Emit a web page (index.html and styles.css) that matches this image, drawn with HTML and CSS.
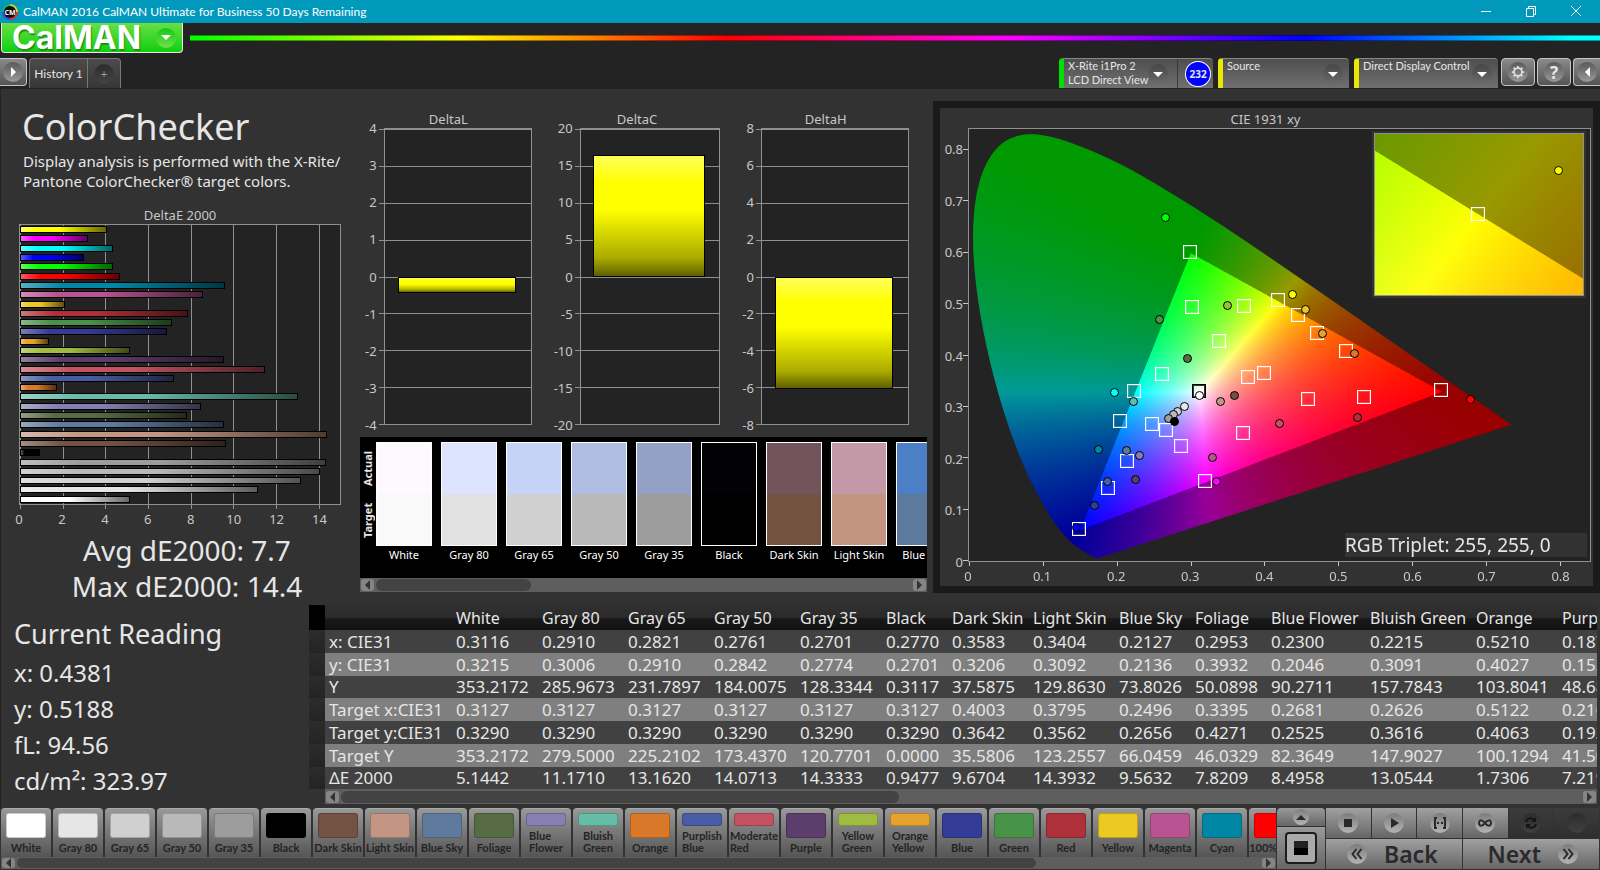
FILE: index.html
```
<!DOCTYPE html>
<html lang="en">
<head>
    <meta charset="UTF-8">
    <meta name="viewport" content="width=device-width, initial-scale=1.0">
    <title>CalMAN 2016 CalMAN Ultimate for Business 50 Days Remaining</title>
    <link rel="stylesheet" href="styles.css">
</head>
<body>

    <header class="titlebar">
        <svg class="app-icon" viewBox="0 0 16 16">
            <circle cx="8" cy="8" r="7" fill="none" stroke="#e0303a" stroke-width="2" stroke-dasharray="11 33"/>
            <circle cx="8" cy="8" r="7" fill="none" stroke="#5a3ad8" stroke-width="2" stroke-dasharray="11 33" stroke-dashoffset="-11"/>
            <circle cx="8" cy="8" r="7" fill="none" stroke="#20b060" stroke-width="2" stroke-dasharray="11 33" stroke-dashoffset="-22"/>
            <circle cx="8" cy="8" r="7" fill="none" stroke="#e8d020" stroke-width="2" stroke-dasharray="11 33" stroke-dashoffset="-33"/>
            <circle cx="8" cy="8" r="6" fill="#0a0a0a"/>
            <text x="8" y="11" class="app-icon-text">CM</text>
        </svg>
        <span class="titlebar-text">CalMAN 2016 CalMAN Ultimate for Business 50 Days Remaining</span>
        <div class="window-buttons">
            <button aria-label="Minimize"><svg viewBox="0 0 12 12"><path d="M1 6.5h10"/></svg></button>
            <button aria-label="Restore"><svg viewBox="0 0 12 12"><path d="M1.5 3.5h7v8h-7zM3.5 3.500v-2h7v8h-2"/></svg></button>
            <button aria-label="Close"><svg viewBox="0 0 12 12"><path d="M1 1l10 10M11 1L1 11"/></svg></button>
        </div>
    </header>

    <div class="brand-row">
        <button class="brand">CalMAN <span class="round green"><i class="tri down"></i></span></button>
        <div class="rainbow"></div>
    </div>

    <nav class="tab-row">
        <button class="square-btn first" aria-label="Show panel"><span class="round"><i class="tri right"></i></span></button>
        <div class="tabs">
            <button class="tab">History 1</button>
            <button class="tab add" aria-label="Add tab"><span class="round dark">+</span></button>
        </div>
        <div class="devices">
            <div class="device meter">
                <button class="device-btn"><span>X-Rite i1Pro 2<br>LCD Direct View</span><span class="round dark"><i class="tri down"></i></span></button>
                <span class="badge">232</span>
            </div>
            <div class="device source">
                <button class="device-btn"><span>Source</span><span class="round dark"><i class="tri down"></i></span></button>
            </div>
            <div class="device display">
                <button class="device-btn"><span>Direct Display Control</span><span class="round dark"><i class="tri down"></i></span></button>
            </div>
            <button class="square-btn" aria-label="Settings">
                <span class="round"><svg viewBox="0 0 16 16" class="gear"><circle cx="8" cy="8" r="4.500"/><path d="M8 1v2.500M8 12.500V15M1 8h2.500M12.500 8H15M3 3l2 2M11 11l2 2M13 3l-2 2M5 11l-2 2"/></svg></span>
            </button>
            <button class="square-btn help" aria-label="Help"><span class="round">?</span></button>
            <button class="square-btn last" aria-label="Hide panel"><span class="round"><i class="tri left"></i></span></button>
        </div>
    </nav>

    <main>
        <div class="top">
            <section class="summary">
                <h1>ColorChecker</h1>
                <p class="intro">Display analysis is performed with the X-Rite/<br>Pantone ColorChecker® target colors.</p>
                <div class="chart-title de-title">DeltaE 2000</div>
                <div class="de-plot" id="dePlot"></div>
                <div class="de-axis" id="deAxis"></div>
                <p class="stats">Avg dE2000: 7.7<br>Max dE2000: 14.4</p>
            </section>

            <section class="middle">
                <div class="deltas" id="deltas"></div>
                <div class="compare">
                    <div class="compare-body">
                        <div class="compare-side"><span>Actual</span><span>Target</span></div>
                        <div class="compare-list" id="compareList"></div>
                    </div>
                    <div class="scroll">
                        <button aria-label="Scroll left"><i class="tri left"></i></button>
                        <div class="track"><div class="thumb compare-thumb"></div></div>
                        <button aria-label="Scroll right"><i class="tri right"></i></button>
                    </div>
                </div>
            </section>

            <section class="cie">
                <div class="chart-title">CIE 1931 xy</div>
                <div class="cie-grid">
                    <div class="cie-y" id="cieY"></div>
                    <div class="cie-plot" id="ciePlot">
                        <canvas id="cieCanvas"></canvas>
                        <div class="inset" id="inset"><canvas id="insetCanvas"></canvas></div>
                        <div class="triplet">RGB Triplet: 255, 255, 0</div>
                    </div>
                    <div class="cie-x" id="cieX"></div>
                </div>
            </section>
        </div>

        <div class="bottom">
            <section class="reading">
                <h2>Current Reading</h2>
                <p>x: 0.4381</p>
                <p>y: 0.5188</p>
                <p>fL: 94.56</p>
                <p>cd/m²: 323.97</p>
            </section>
            <section class="data">
                <table id="dataTable"></table>
                <div class="scroll data-scroll">
                    <button aria-label="Scroll left"><i class="tri left"></i></button>
                    <div class="track"><div class="thumb data-thumb"></div></div>
                    <button aria-label="Scroll right"><i class="tri right"></i></button>
                </div>
            </section>
        </div>
    </main>

    <footer>
        <div class="patches">
            <div class="patch-list" id="patchList"></div>
            <div class="scroll">
                <button aria-label="Scroll left"><i class="tri left"></i></button>
                <div class="track"><div class="thumb patch-thumb"></div></div>
                <button aria-label="Scroll right"><i class="tri right"></i></button>
            </div>
        </div>
        <div class="pattern">
            <button class="pattern-up" aria-label="Expand"><span class="round light"><i class="tri up"></i></span></button>
            <button class="pattern-window" aria-label="Pattern window"><span class="window-icon"><i></i></span></button>
        </div>
        <div class="controls">
            <button aria-label="Stop"><span class="round light"><svg viewBox="0 0 20 20"><path d="M6 6h8v8H6z"/></svg></span></button>
            <button aria-label="Play"><span class="round light"><svg viewBox="0 0 20 20"><path d="M7 5l8 5-8 5z"/></svg></span></button>
            <button aria-label="Read series"><span class="round light"><svg viewBox="0 0 20 20"><path class="line" d="M7 5H5v10h2M13 5h2v10h-2"/><path d="M7 9h2v2H7zM11 9h2v2h-2z"/></svg></span></button>
            <button aria-label="Continuous"><span class="round light"><svg viewBox="0 0 20 20"><path class="line" d="M10 10c-2-3-6-4-6 0s4 3 6 0 6-4 6 0-4 3-6 0z"/></svg></span></button>
            <button class="off" aria-label="Refresh"><span class="round dark"><svg viewBox="0 0 20 20"><path class="line thick" d="M5 9c1-4 6-5 8-2M15 11c-1 4-6 5-8 2"/><path d="M15 4v5h-5zM5 16v-5h5z"/></svg></span></button>
            <button class="off" aria-label="Unused"><span class="round dark"></span></button>
            <button class="wide"><span class="round light"><svg viewBox="0 0 20 20"><path class="line" d="M9.500 5l-4 5 4 5M14.500 5l-4 5 4 5"/></svg></span><b>Back</b></button>
            <button class="wide next"><b>Next</b><span class="round light"><svg viewBox="0 0 20 20"><path class="line" d="M5.500 5l4 5-4 5M10.500 5l4 5-4 5"/></svg></span></button>
        </div>
    </footer>

    <script src="script.js"></script>
</body>
</html>
```
FILE: styles.css
```
* {
    box-sizing: border-box;
}

body {
    margin: 0;
    height: 100vh;
    overflow: hidden;
    display: flex;
    flex-direction: column;
    background-color: #232323;
    color: #e6e6e6;
    font-family: "Noto Sans", "Open Sans", sans-serif;
    font-size: 13px;
}

button {
    font-family: inherit;
    font-size: inherit;
    color: inherit;
    border: none;
    padding: 0;
    margin: 0;
    background: none;
    cursor: pointer;
}

h1, h2, p {
    margin: 0;
    font-weight: normal;
}

canvas {
    display: block;
    width: 100%;
    height: 100%;
}

/* small shared shapes */
.tri {
    display: block;
    border: 5px solid transparent;
}

.tri.down {
    border-top-color: #fff;
    border-bottom: none;
}

.tri.up {
    border-bottom-color: #2a2a2a;
    border-top: none;
}

.tri.right {
    border-left-color: #fff;
    border-right: none;
}

.tri.left {
    border-right-color: #fff;
    border-left: none;
}

.round {
    display: flex;
    align-items: center;
    justify-content: center;
    flex: none;
    width: 20px;
    height: 20px;
    border-radius: 50%;
    background: linear-gradient(#5a5a5a, #999);
}

.round.dark {
    background: linear-gradient(#474747, #6a6a6a);
}

.round.green {
    background: linear-gradient(#14c814, #6fe24c);
}

.round.light {
    background: linear-gradient(#7c7c7c, #b4b4b4);
}

/* title bar */
.titlebar {
    display: flex;
    align-items: center;
    height: 23px;
    flex: none;
    padding-left: 2px;
    background-color: #0099bc;
    color: #fff;
}

.app-icon {
    width: 16px;
    height: 16px;
    margin-right: 5px;
}

.app-icon-text {
    font-size: 7px;
    font-weight: bold;
    fill: #fff;
    text-anchor: middle;
}

.titlebar-text {
    font-family: Lato, sans-serif;
    font-size: 12px;
}

.window-buttons {
    display: flex;
    margin-left: auto;
    margin-right: 2px;
}

.window-buttons button {
    width: 45px;
    height: 23px;
}

.window-buttons svg {
    width: 12px;
    height: 12px;
    fill: none;
    stroke: #fff;
}

.window-buttons button:hover {
    background-color: #33adc9;
}

/* brand and rainbow line */
.brand-row {
    display: flex;
    height: 35px;
    flex: none;
}

.brand {
    display: flex;
    align-items: center;
    justify-content: space-between;
    width: 182px;
    height: 30px;
    margin-left: 1px;
    padding: 0 6px 0 10px;
    border: 1px solid #e8e8e8;
    border-top: none;
    border-radius: 0 0 4px 4px;
    background: linear-gradient(#68e044, #10cf10);
    color: #fff;
    font-family: Inter, sans-serif;
    font-size: 32px;
    font-weight: 700;
    line-height: 28px;
    text-shadow: 1px 2px 1px #2a8a1a;
}

.rainbow {
    flex: 1;
    height: 6px;
    margin: 12px 0 0 7px;
    border: 1px solid rgba(0, 0, 0, 0.4);
    border-width: 1px 0;
    background: linear-gradient(to right, #0f0, #ff0 19%, #f00 38%, #f0f 58%, #00f 79%, #0ff 98%);
}

/* tabs and devices */
.tab-row {
    display: flex;
    height: 31px;
    flex: none;
}

.square-btn {
    display: flex;
    align-items: center;
    justify-content: center;
    width: 34px;
    height: 28px;
    border: 1px solid #c4c4c4;
    border-radius: 4px;
    background: linear-gradient(#8a8a8a, #555);
}

.square-btn.first {
    width: 27px;
    border-left: none;
    border-radius: 0 4px 4px 0;
}

.square-btn.last {
    width: 27px;
    border-right: none;
    border-radius: 4px 0 0 4px;
}

.square-btn.help {
    font-size: 17px;
    font-weight: bold;
}

.gear {
    width: 14px;
    height: 14px;
    fill: none;
    stroke: #ddd;
    stroke-width: 2;
}

.tabs {
    display: flex;
    height: 30px;
    margin-left: 2px;
    border: 1px solid #777;
    border-bottom: none;
    border-radius: 4px 4px 0 0;
    background: linear-gradient(#4c4c4c, #363636);
}

.tab {
    width: 57px;
    font-size: 12px;
    font-family: Lato, sans-serif;
}

.tab.add {
    display: flex;
    align-items: center;
    justify-content: center;
    width: 33px;
    border-left: 1px solid #777;
    color: #999;
}

.tab .round {
    background: linear-gradient(#2c2c2c, #444);
}

.devices {
    display: flex;
    gap: 2px;
    margin-left: auto;
}

.device {
    display: flex;
    align-items: center;
    height: 30px;
    margin-right: 3px;
    border-top: 1px solid #888;
    border-left: 5px solid #e8e800;
    border-radius: 4px 4px 0 0;
    background: linear-gradient(#4e4e4e, #707070);
}

.device-btn {
    display: flex;
    flex: 1;
    align-items: flex-start;
    justify-content: space-between;
    height: 29px;
    padding: 0 6px 0 4px;
    font-family: Lato, sans-serif;
    font-size: 11px;
    line-height: 14px;
    text-align: left;
    white-space: nowrap;
}

.device-btn .round {
    margin-top: 5px;
}

.meter {
    width: 154px;
    border-left-color: #00e000;
}

.meter .device-btn {
    padding-right: 9px;
    border-right: 1px solid #3a3a3a;
}

.source {
    width: 131px;
}

.display {
    width: 144px;
    margin-right: 1px;
}

.badge {
    width: 26px;
    height: 26px;
    margin: 0 2px 0 7px;
    border: 1px solid #fff;
    border-radius: 50%;
    background-color: #00f;
    font-size: 10px;
    font-weight: bold;
    line-height: 24px;
    text-align: center;
}

/* main area */
main {
    flex: 1;
    min-height: 0;
    border-left: 1px solid #222;
    background-color: #323232;
}

.top {
    display: flex;
    height: 511px;
}

.summary {
    width: 349px;
    flex: none;
    padding: 14px 9px 0 18px;
}

h1 {
    padding-left: 3px;
    font-size: 36px;
    line-height: 48px;
}

.intro {
    padding-left: 4px;
    font-size: 15px;
    line-height: 20px;
    white-space: nowrap;
}

.chart-title {
    color: #c8c8c8;
    font-size: 13px;
    line-height: 18px;
    text-align: center;
}

.de-title {
    margin-top: 15px;
}

.de-plot {
    position: relative;
    display: flex;
    flex-direction: column;
    justify-content: space-around;
    height: 281px;
    border: 1px solid #909090;
    background-color: #232323;
}

.grid-v {
    position: absolute;
    top: 0;
    bottom: -5px;
    width: 1px;
    background-color: #909090;
}

.de-bar {
    position: relative;
    height: 7px;
    border: 1px solid #000;
}

.de-axis {
    position: relative;
    height: 27px;
}

.de-axis span,
.cie-x span {
    position: absolute;
    top: 3px;
    width: 40px;
    margin-left: -20px;
    color: #c8c8c8;
    font-size: 13px;
    line-height: 22px;
    text-align: center;
}

.stats {
    padding-left: 14px;
    font-size: 28px;
    line-height: 36px;
    text-align: center;
}

/* delta charts */
.middle {
    width: 583px;
    flex: none;
    padding-left: 10px;
}

.deltas {
    display: flex;
    gap: 22px;
    height: 348px;
    padding: 21px 24px 0 5px;
}

.delta {
    flex: 1;
}

.delta-body {
    display: flex;
    height: 297px;
}

.delta-labels {
    display: flex;
    flex-direction: column;
    justify-content: space-between;
    margin: -9px 7px -9px 0;
    color: #c8c8c8;
    font-size: 13px;
    line-height: 18px;
    text-align: right;
}

.delta-plot {
    position: relative;
    flex: 1;
    border: 1px solid #909090;
    background-color: #232323;
}

.grid-h {
    position: absolute;
    left: -6px;
    right: 0;
    height: 1px;
    background-color: #909090;
}

.delta-bar {
    position: absolute;
    left: 9%;
    right: 10%;
    border: 1px solid #000;
    background: linear-gradient(#ffff5a, #ff0 22%, #ff0 45%, #aaaa00 85%, #606000);
}

/* actual / target swatches */
.compare {
    width: 567px;
    background-color: #000;
}

.compare-body {
    display: flex;
    height: 141px;
    padding-top: 5px;
}

.compare-side {
    display: flex;
    flex-direction: column;
    width: 16px;
    height: 104px;
    flex: none;
}

.compare-side span {
    flex: 1;
    font-size: 11px;
    font-weight: bold;
    line-height: 15px;
    text-align: center;
    writing-mode: vertical-rl;
    transform: rotate(180deg);
}

.compare-list {
    display: flex;
    gap: 9px;
    overflow: hidden;
}

.compare-item {
    width: 56px;
    flex: none;
    color: #fff;
    font-size: 11px;
    line-height: 18px;
    text-align: center;
    white-space: nowrap;
}

.compare-swatch {
    height: 104px;
    border: 1px solid #fff;
}

/* drawn scroll bars */
.scroll {
    display: flex;
    align-items: center;
    height: 14px;
    padding: 0 1px;
    background-color: #5e5e5e;
}

.scroll button {
    display: flex;
    align-items: center;
    justify-content: center;
    width: 13px;
    height: 12px;
    border-radius: 3px;
    background-color: #858585;
}

.scroll .tri.left {
    border-right-color: #333;
}

.scroll .tri.right {
    border-left-color: #333;
}

.track {
    flex: 1;
    padding: 0 2px;
}

.thumb {
    height: 12px;
    border-radius: 6px;
    background-color: #434343;
}

.compare-thumb {
    width: 29%;
}

.data-thumb {
    width: 45%;
}

.patch-thumb {
    width: 82%;
}

/* CIE chart */
.cie {
    flex: 1;
    height: 492px;
    margin-top: 12px;
    padding: 2px 2px 0 0;
    border: 7px solid #1a1a1a;
}

.cie-grid {
    display: grid;
    grid-template-columns: 28px 1fr;
    grid-template-rows: 434px 24px;
}

.cie-y {
    position: relative;
}

.cie-y span {
    position: absolute;
    right: 5px;
    margin-bottom: -9px;
    color: #c8c8c8;
    font-size: 13px;
    line-height: 18px;
}

.cie-x {
    position: relative;
    grid-column: 2;
}

.cie-plot {
    position: relative;
    border: 1px solid #909090;
    background-color: #232323;
}

.tick-x {
    position: absolute;
    bottom: -5px;
    width: 1px;
    height: 4px;
    background-color: #c8c8c8;
}

.tick-y {
    position: absolute;
    left: -6px;
    width: 5px;
    height: 1px;
    background-color: #c8c8c8;
}

.inset {
    position: absolute;
    top: 4px;
    right: 6px;
    width: 210px;
    height: 163px;
    border: 1px solid #909090;
    box-shadow: 0 0 0 2px #323232;
}

.triplet {
    position: absolute;
    right: 3px;
    bottom: 4px;
    width: 242px;
    height: 24px;
    background-color: #323232;
    font-size: 19px;
    line-height: 24px;
}

.target {
    position: absolute;
    width: 14px;
    height: 14px;
    margin: -8px 0 0 -8px;
    border: 1px solid #fff;
    outline: 1px solid rgba(255, 255, 255, 0.2);
    outline-offset: -2px;
}

.target.current {
    border: 2px solid #000;
}

.measured {
    position: absolute;
    width: 9px;
    height: 9px;
    margin: -5px 0 0 -4px;
    border: 1px solid #000;
    border-radius: 50%;
}

/* reading and data table */
.bottom {
    display: flex;
}

.reading {
    width: 308px;
    flex: none;
    padding: 13px 0 0 13px;
}

h2 {
    font-size: 27px;
    line-height: 42px;
}

.reading p {
    font-size: 24px;
    line-height: 36px;
}

.data {
    flex: 1;
    min-width: 0;
    margin: 5px 3px 0 0;
    overflow: hidden;
}

table {
    width: 1365px;
    table-layout: fixed;
    border-collapse: collapse;
    font-size: 17px;
}

th, td {
    height: 23px;
    padding: 0 0 0 5px;
    font-weight: normal;
    line-height: 22px;
    text-align: left;
    white-space: nowrap;
}

tbody tr:nth-child(4n+3) > * {
    height: 22px;
}

thead tr {
    background: linear-gradient(#303030, #2a2a2a 50%, #1a1a1a 51%, #111);
}

thead th {
    height: 25px;
    font-size: 16px;
}

thead .handle {
    background-color: #000;
}

tbody tr {
    background-color: #414141;
}

tbody tr:nth-child(even) {
    background-color: #7f7f7f;
}

tbody th {
    padding-left: 4px;
}

tbody .handle {
    background: linear-gradient(#2c2c2c, #242424);
}

.data-scroll {
    height: 15px;
    margin-left: 16px;
}

/* patch buttons */
footer {
    display: flex;
    height: 62px;
    flex: none;
    background-color: #323232;
}

.patches {
    flex: 1;
    min-width: 0;
    padding-left: 1px;
}

.patch-list {
    display: flex;
    gap: 2px;
    height: 49px;
    overflow: hidden;
}

.patch {
    display: flex;
    flex-direction: column;
    align-items: center;
    width: 50px;
    height: 49px;
    flex: none;
    padding: 4px 0 3px;
    border-top: 1px solid #aaa;
    border-radius: 4px 4px 0 0;
    background: linear-gradient(#989898, #555);
    color: #242424;
    font-family: Lato, sans-serif;
    font-size: 11px;
    font-weight: bold;
    line-height: 12px;
    text-align: left;
    white-space: nowrap;
}

.patch-color {
    width: 40px;
    flex: 1;
    margin-bottom: 4px;
    border: 1px solid rgba(0, 0, 0, 0.2);
    border-radius: 3px;
}

.patches .scroll {
    height: 12px;
}

.patches .scroll button,
.patches .thumb {
    height: 10px;
}

.pattern {
    width: 48px;
    margin: 0 1px;
}

.pattern button {
    display: flex;
    align-items: center;
    justify-content: center;
    width: 48px;
    background: linear-gradient(#999, #666);
}

.pattern .pattern-up {
    height: 18px;
    margin-bottom: 1px;
    border-radius: 4px 4px 0 0;
}

.pattern .round {
    width: 16px;
    height: 16px;
}

.pattern .pattern-window {
    height: 42px;
}

.window-icon {
    padding: 7px;
    border: 2px solid #1c1c1c;
    border-radius: 4px;
    background-color: #aaa;
}

.window-icon i {
    display: block;
    width: 14px;
    height: 14px;
    background: linear-gradient(#222 50%, #000 50%);
}

.controls {
    display: grid;
    grid-template-columns: repeat(6, 1fr);
    grid-template-rows: 30px 30px;
    gap: 1px;
    width: 273px;
    margin-right: 1px;
}

.controls button {
    display: flex;
    align-items: center;
    justify-content: center;
    background: linear-gradient(#a0a0a0, #666);
}

.controls .off {
    background: linear-gradient(#3c3c3c, #2e2e2e);
}

.controls .off .round {
    background: linear-gradient(#2c2c2c, #404040);
}

.controls svg {
    width: 20px;
    height: 20px;
    fill: #2a2a2a;
}

.controls .line {
    fill: none;
    stroke: #2a2a2a;
    stroke-width: 2;
}

.controls .off svg {
    fill: #151515;
}

.controls .off .line {
    stroke: #151515;
}

.controls .wide {
    grid-column: span 3;
    justify-content: flex-start;
    gap: 17px;
    padding: 0 21px;
    color: #2a2a2a;
    font-size: 23px;
}

.controls .next {
    justify-content: flex-end;
}

.controls b {
    font-weight: 600;
    line-height: 28px;
}
```
FILE: script.js
```
// name, color, deltaE, target xy, measured xy
const patches = [
    ["White", "#ffffff", 5.1442, 0.3127, 0.3290, 0.3116, 0.3215],
    ["Gray 80", "#e6e6e6", 11.171, 0.3127, 0.3290, 0.2910, 0.3006],
    ["Gray 65", "#d0d0d0", 13.162, 0.3127, 0.3290, 0.2821, 0.2910],
    ["Gray 50", "#b9b9b9", 14.0713, 0.3127, 0.3290, 0.2761, 0.2842],
    ["Gray 35", "#9d9d9d", 14.3333, 0.3127, 0.3290, 0.2701, 0.2774],
    ["Black", "#000000", 0.9477, 0.3127, 0.3290, 0.2770, 0.2701],
    ["Dark Skin", "#735244", 9.6704, 0.4003, 0.3642, 0.3583, 0.3206],
    ["Light Skin", "#c29682", 14.3932, 0.3795, 0.3562, 0.3404, 0.3092],
    ["Blue Sky", "#5e7a9d", 9.5632, 0.2496, 0.2656, 0.2127, 0.2136],
    ["Foliage", "#576c42", 7.8209, 0.3395, 0.4271, 0.2953, 0.3932],
    ["Blue Flower", "#8580b1", 8.4958, 0.2681, 0.2525, 0.2300, 0.2046],
    ["Bluish Green", "#65bda8", 13.0544, 0.2626, 0.3616, 0.2215, 0.3091],
    ["Orange", "#d97828", 1.7306, 0.5122, 0.4063, 0.5210, 0.4027],
    ["Purplish Blue", "#4a5ca6", 7.219, 0.2160, 0.1920, 0.1870, 0.1530],
    ["Moderate Red", "#c35362", 11.47, 0.4600, 0.3130, 0.4195, 0.2675],
    ["Purple", "#5c3d6b", 9.55, 0.2890, 0.2220, 0.2245, 0.1570],
    ["Yellow Green", "#9fbb40", 5.15, 0.3740, 0.4950, 0.3490, 0.4970],
    ["Orange Yellow", "#e6a22e", 1.35, 0.4730, 0.4420, 0.4780, 0.4415],
    ["Blue", "#333c96", 6.88, 0.1900, 0.1410, 0.1687, 0.1070],
    ["Green", "#479347", 7.13, 0.3035, 0.4925, 0.2575, 0.4700],
    ["Red", "#ae3038", 7.87, 0.5365, 0.3170, 0.5260, 0.2790],
    ["Yellow", "#ebc822", 2.1, 0.4465, 0.4765, 0.4555, 0.4880],
    ["Magenta", "#b95391", 8.56, 0.3720, 0.2470, 0.3286, 0.2000],
    ["Cyan", "#0087a6", 9.6, 0.2060, 0.2705, 0.1745, 0.2155],
    ["100% Red", "#ff0000", 4.7, 0.6400, 0.3300, 0.6790, 0.3135],
    ["100% Green", "#00ff00", 4.35, 0.3000, 0.6000, 0.2650, 0.6670],
    ["100% Blue", "#0000ff", 3.0, 0.1500, 0.0600, 0.1448, 0.0640],
    ["100% Cyan", "#00ffff", 4.35, 0.2246, 0.3287, 0.1970, 0.3270],
    ["100% Magenta", "#ff00ff", 3.2, 0.3209, 0.1542, 0.3340, 0.1535],
    ["100% Yellow", "#ffff00", 4.06, 0.4193, 0.5053, 0.4381, 0.5188]
];

function add(parent, className, style, text) {
    const el = document.createElement(parent.tagName === "DIV" && text !== undefined ? "span" : "div");
    el.className = className;
    Object.assign(el.style, style || {});
    if (text !== undefined) el.textContent = text;
    parent.appendChild(el);
    return el;
}

// DeltaE bars, last patch on top
const dePlot = document.getElementById("dePlot");
const deAxis = document.getElementById("deAxis");
for (let v = 0; v < 15; v += 2) {
    add(dePlot, "grid-v", { left: v / 15 * 100 + "%" });
    add(deAxis, "", { left: v / 15 * 100 + "%" }, v);
}
[...patches].reverse().forEach(([, color, dE]) => {
    add(dePlot, "de-bar", {
        width: dE / 15 * 100 + "%",
        background: `linear-gradient(to right, rgba(255,255,255,.35), transparent 20%, transparent 45%, rgba(0,0,0,.6)), ${color}`
    });
});

// DeltaL, DeltaC, DeltaH
[["DeltaL", 4, -0.46], ["DeltaC", 20, 16.5], ["DeltaH", 8, -6.1]].forEach(([name, max, value]) => {
    const chart = add(document.getElementById("deltas"), "delta");
    add(chart, "chart-title").textContent = name;
    const body = add(chart, "delta-body");
    const labels = add(body, "delta-labels");
    const plot = add(body, "delta-plot");
    for (let i = 0; i <= 8; i++) {
        add(labels, "", {}, max - i * max / 4);
        add(plot, "grid-h", { top: i * 12.5 + "%" });
    }
    const top = value > 0 ? 50 - value / max * 50 : 50;
    add(plot, "delta-bar", { top: top + "%", height: Math.abs(value) / max * 50 + "%" });
});

// actual over target
const actual = ["#fdf9ff", "#dbe3ff", "#c6d2f6", "#b0bde2", "#93a1c6", "#020204", "#73545a", "#c398a7", "#4c80c6"];
const target = ["#f9f9f9", "#e1e1e1", "#d0d0d0", "#b9b9b9", "#9d9d9d", "#000000", "#735240", "#c29580", "#5c7a9c"];
actual.forEach((color, i) => {
    const item = add(document.getElementById("compareList"), "compare-item");
    add(item, "compare-swatch", { background: `linear-gradient(${color} 50%, ${target[i]} 50%)` });
    add(item, "", {}, patches[i][0]);
});

// data table
const widths = [16, 126, 86, 86, 86, 86, 86, 66, 81, 86, 76, 76, 99, 106, 86, 117];
const rows = [
    ["x: CIE31", "0.3116", "0.2910", "0.2821", "0.2761", "0.2701", "0.2770", "0.3583", "0.3404", "0.2127", "0.2953", "0.2300", "0.2215", "0.5210", "0.1870"],
    ["y: CIE31", "0.3215", "0.3006", "0.2910", "0.2842", "0.2774", "0.2701", "0.3206", "0.3092", "0.2136", "0.3932", "0.2046", "0.3091", "0.4027", "0.1530"],
    ["Y", "353.2172", "285.9673", "231.7897", "184.0075", "128.3344", "0.3117", "37.5875", "129.8630", "73.8026", "50.0898", "90.2711", "157.7843", "103.8041", "48.6800"],
    ["Target x:CIE31", "0.3127", "0.3127", "0.3127", "0.3127", "0.3127", "0.3127", "0.4003", "0.3795", "0.2496", "0.3395", "0.2681", "0.2626", "0.5122", "0.2160"],
    ["Target y:CIE31", "0.3290", "0.3290", "0.3290", "0.3290", "0.3290", "0.3290", "0.3642", "0.3562", "0.2656", "0.4271", "0.2525", "0.3616", "0.4063", "0.1920"],
    ["Target Y", "353.2172", "279.5000", "225.2102", "173.4370", "120.7701", "0.0000", "35.5806", "123.2557", "66.0459", "46.0329", "82.3649", "147.9027", "100.1294", "41.5000"],
    ["ΔE 2000", "5.1442", "11.1710", "13.1620", "14.0713", "14.3333", "0.9477", "9.6704", "14.3932", "9.5632", "7.8209", "8.4958", "13.0544", "1.7306", "7.2190"]
];
document.getElementById("dataTable").innerHTML =
    "<colgroup>" + widths.map(w => `<col style="width:${w}px">`).join("") + "</colgroup>" +
    '<thead><tr><td class="handle"></td><td></td>' +
    patches.slice(0, 14).map(p => `<th scope="col">${p[0]}</th>`).join("") + "</tr></thead><tbody>" +
    rows.map(r => `<tr><td class="handle"></td><th scope="row">${r[0]}</th>` +
        r.slice(1).map(v => `<td>${v}</td>`).join("") + "</tr>").join("") + "</tbody>";

// patch buttons
patches.slice(0, 25).forEach(([name, color]) => {
    const btn = document.createElement("button");
    btn.className = "patch";
    const twoLines = ["Blue Flower", "Bluish Green", "Purplish Blue", "Moderate Red", "Yellow Green", "Orange Yellow"].includes(name);
    btn.innerHTML = `<span class="patch-color" style="background-color:${color}"></span><span>${twoLines ? name.replace(" ", "<br>") : name}</span>`;
    document.getElementById("patchList").appendChild(btn);
});

// chromaticity diagram
const MAX = 0.841;
const locus = [
    [.1741, .0050], [.1689, .0069], [.1644, .0109], [.1566, .0177], [.1440, .0297], [.1355, .0399], [.1241, .0578],
    [.1096, .0868], [.0913, .1327], [.0687, .2007], [.0454, .2950], [.0235, .4127], [.0082, .5384], [.0039, .6548],
    [.0139, .7502], [.0389, .8120], [.0743, .8338], [.1142, .8262], [.1547, .8059], [.1929, .7816], [.2296, .7543],
    [.3016, .6923], [.3731, .6245], [.4441, .5547], [.5125, .4866], [.5752, .4242], [.6270, .3725], [.6915, .3083], [.7347, .2653]
];

function xyToRgb(x, y) {
    const z = 1 - x - y;
    const r = 3.2406 * x - 1.5372 * y - 0.4986 * z;
    const g = -0.9689 * x + 1.8758 * y + 0.0415 * z;
    const b = 0.0557 * x - 0.2040 * y + 1.0570 * z;
    const scale = (Math.min(r, g, b) < 0 ? 153 : 255) / Math.max(r, g, b);
    return [r * scale, g * scale, b * scale];
}

function paint(canvas, x0, x1, y0, y1) {
    const w = canvas.width = canvas.clientWidth * 2;
    const h = canvas.height = canvas.clientHeight * 2;
    const ctx = canvas.getContext("2d");
    const img = ctx.createImageData(w, h);
    for (let j = 0; j < h; j++) {
        for (let i = 0; i < w; i++) {
            const rgb = xyToRgb(x0 + (x1 - x0) * i / w, y1 - (y1 - y0) * j / h);
            const k = (j * w + i) * 4;
            img.data[k] = rgb[0];
            img.data[k + 1] = rgb[1];
            img.data[k + 2] = rgb[2];
            img.data[k + 3] = 255;
        }
    }
    ctx.putImageData(img, 0, 0);

    // keep only what is inside the spectral locus
    const px = p => [(p[0] - x0) / (x1 - x0) * w, (y1 - p[1]) / (y1 - y0) * h];
    ctx.globalCompositeOperation = "destination-in";
    ctx.beginPath();
    ctx.moveTo(...px(locus[0]));
    for (let i = 1; i < locus.length - 1; i++) {
        const [ax, ay] = px(locus[i]);
        const [bx, by] = px(locus[i + 1]);
        ctx.quadraticCurveTo(ax, ay, (ax + bx) / 2, (ay + by) / 2);
    }
    ctx.lineTo(...px(locus[locus.length - 1]));
    ctx.closePath();
    ctx.fill();
}

function mark(plot, className, x, y, x0, x1, y0, y1, color) {
    add(plot, className, {
        left: (x - x0) / (x1 - x0) * 100 + "%",
        top: (y1 - y) / (y1 - y0) * 100 + "%",
        backgroundColor: color || ""
    });
}

const ciePlot = document.getElementById("ciePlot");
const inset = document.getElementById("inset");
paint(document.getElementById("cieCanvas"), 0, MAX, 0, MAX);
paint(document.getElementById("insetCanvas"), 0.3946, 0.4440, 0.4806, 0.5300);

patches.forEach(p => {
    if (p[3] !== 0.3127) mark(ciePlot, "target", p[3], p[4], 0, MAX, 0, MAX);
});
mark(ciePlot, "target current", 0.3127, 0.3290, 0, MAX, 0, MAX);
patches.forEach(p => mark(ciePlot, "measured", p[5], p[6], 0, MAX, 0, MAX, p[1]));
mark(inset, "target", 0.4193, 0.5053, 0.3946, 0.4440, 0.4806, 0.5300);
mark(inset, "measured", 0.4381, 0.5188, 0.3946, 0.4440, 0.4806, 0.5300, "#ffff00");

for (let i = 0; i <= 8; i++) {
    const at = i / 10 / MAX * 100 + "%";
    const label = i ? "0." + i : "0";
    add(ciePlot, "tick-x", { left: at });
    add(ciePlot, "tick-y", { bottom: at });
    add(document.getElementById("cieX"), "", { left: at }, label);
    add(document.getElementById("cieY"), "", { bottom: at }, label);
}
```
